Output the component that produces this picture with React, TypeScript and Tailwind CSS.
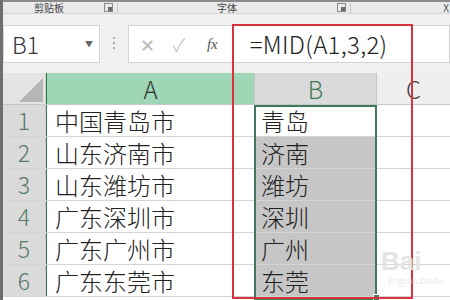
import React from 'react';

const rows = [
  { n: 1, a: '中国青岛市', b: '青岛' },
  { n: 2, a: '山东济南市', b: '济南' },
  { n: 3, a: '山东潍坊市', b: '潍坊' },
  { n: 4, a: '广东深圳市', b: '深圳' },
  { n: 5, a: '广东广州市', b: '广州' },
  { n: 6, a: '广东东莞市', b: '东莞' },
];

const Launcher = () => (
  <svg width="9" height="9" viewBox="0 0 9 9" className="shrink-0">
    <rect x="0.5" y="0.5" width="8" height="8" fill="none" stroke="#8a8a8a" />
    <rect x="4" y="4" width="4" height="4" fill="#6a6a6a" />
  </svg>
);

export default function App() {
  return (
    <div
      className="relative w-[450px] h-[300px] overflow-hidden bg-white border-l-[3px] border-[#6e6e6e] font-light"
      style={{ fontFamily: '"Noto Sans CJK SC", "Noto Sans", sans-serif' }}
    >
      {/* ribbon group labels */}
      <div className="flex items-center h-[14px] bg-[#e9e9e9] border-t-2 border-[#8a8a8a] border-b border-b-[#d6d6d6] text-[10px] leading-none text-[#444] font-normal">
        <span className="ml-[31px] w-[70px]">剪贴板</span>
        <Launcher />
        <span className="ml-[4px] w-px h-[10px] bg-[#c8c8c8]" />
        <span className="ml-[99px] w-[120px]">字体</span>
        <Launcher />
        <span className="ml-[4px] w-px h-[10px] bg-[#c8c8c8]" />
        <span className="ml-auto mr-[1px] text-[#555]">X</span>
      </div>

      {/* formula bar */}
      <div className="flex items-start h-[59px] bg-[#f0f0f0] pt-[11px]">
        <div className="flex items-center w-[97px] h-[38px] bg-white border border-[#d4d4d4] pl-[8px] pr-[6px]">
          <span className="text-[23px] text-[#333] leading-none">B1</span>
          <span className="ml-auto text-[8px] text-[#666]">▼</span>
        </div>
        <div className="flex flex-col gap-[3px] ml-[13px] mt-[12px]">
          <span className="w-[2px] h-[2px] bg-[#aaa]" />
          <span className="w-[2px] h-[2px] bg-[#aaa]" />
          <span className="w-[2px] h-[2px] bg-[#aaa]" />
        </div>
        <div className="flex items-center flex-1 h-[38px] ml-[13px] bg-white border border-[#d4d4d4]">
          <span className="ml-[11px] text-[18px] text-[#b8b8b8] leading-none">✕</span>
          <span className="ml-[18px] text-[18px] text-[#b8b8b8] leading-none">✓</span>
          <span
            className="ml-[22px] text-[15px] italic text-[#555] leading-none"
            style={{ fontFamily: '"Liberation Serif", serif' }}
          >
            fx
          </span>
          <span className="ml-[32px] text-[24px] text-[#222] leading-none tracking-[0.3px]">=MID(A1,3,2)</span>
        </div>
      </div>

      {/* column headers */}
      <div className="flex h-[32px] border-b border-[#c6c6c6]">
        <div className="relative w-[43px] bg-[#e4e4e4] border-r border-[#cfcfcf]">
          <svg className="absolute right-[2px] bottom-[2px]" width="24" height="24" viewBox="0 0 24 24">
            <polygon points="24,0 24,24 0,24" fill="#b6b6b6" />
          </svg>
        </div>
        <div className="w-px bg-[#2d7a50]" />
        <div className="flex items-center justify-center w-[207px] bg-[#9fd6b6] text-[24px] text-[#333] leading-none">A</div>
        <div className="flex items-center justify-center w-[122px] bg-[#dadada] text-[24px] text-[#3e7a5a] leading-none border-l border-[#c6c6c6]">B</div>
        <div className="flex items-center justify-center flex-1 bg-[#efefef] text-[24px] text-[#444] leading-none border-l border-[#c6c6c6]">C</div>
      </div>

      {/* rows */}
      {rows.map(r => (
        <div key={r.n} className="flex h-[32px] border-b border-[#d4d4d4]">
          <div className="flex items-center justify-center w-[43px] bg-[#dadada] text-[23px] text-[#557a66] leading-none border-r border-[#cfcfcf]">
            {r.n}
          </div>
          <div className="w-px bg-[#2d7a50]" />
          <div className="flex items-center w-[207px] pl-[8px] text-[24px] text-[#222] leading-none">{r.a}</div>
          <div
            className={`flex items-center w-[122px] pl-[6px] text-[24px] text-[#222] leading-none border-l border-[#d4d4d4] ${
              r.n === 1 ? 'bg-white' : 'bg-[#c6c6c6]'
            }`}
          >
            {r.b}
          </div>
          <div className="flex-1 border-l border-[#d4d4d4]" />
        </div>
      ))}

      {/* selection border B1:B6 */}
      <div className="absolute left-[251px] top-[105px] w-[123px] h-[195px] border-2 border-[#3d7b5b]" />
      <div className="absolute left-[370px] top-[294px] w-[7px] h-[7px] bg-[#3d7b5b] border border-white" />

      {/* red annotation box */}
      <div className="absolute left-[229px] top-[24px] w-[181px] h-[275px] border-2 border-[#d8343e]" />

      {/* watermark */}
      <div className="absolute left-[378px] top-[248px] text-[26px] font-bold text-[#e2e2e2] leading-none opacity-90" style={{ fontFamily: '"Liberation Sans", sans-serif' }}>
        Bai
      </div>
      <div className="absolute left-[385px] top-[276px] text-[9px] text-[#e2e2e2] leading-none">jingyan.baidu</div>
    </div>
  );
}
